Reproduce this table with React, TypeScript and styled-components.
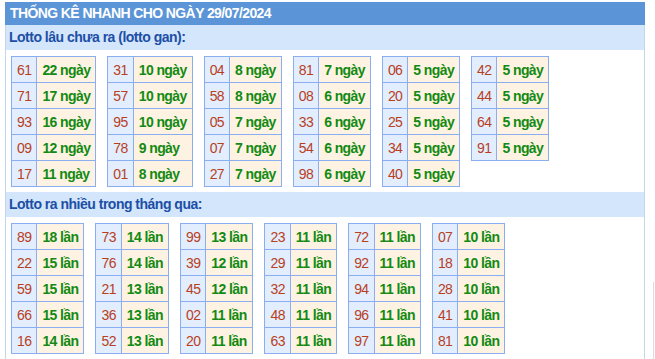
import React from 'react';
import styled, { createGlobalStyle } from 'styled-components';

const GlobalStyle = createGlobalStyle`
  body {
    margin: 0;
    background: #ffffff;
    overflow-x: hidden;
    font-family: 'Liberation Sans', Arial, sans-serif;
  }
`;

const Page = styled.div`
  display: flex;
  align-items: flex-start;
  gap: 8px;
  padding: 2px 0 0 5px;
`;

const Box = styled.div`
  flex-shrink: 0;
  width: 640px;
  box-sizing: border-box;
  border-left: 1px solid #c4d6ee;
  border-right: 1px solid #c4d6ee;
  min-height: 370px;
`;

const Title = styled.div`
  height: 23px;
  line-height: 23px;
  margin: 0 -1px;
  padding-left: 5px;
  background: #5b95d8;
  color: #ffffff;
  font-size: 14px;
  letter-spacing: -0.6px;
  font-weight: bold;
`;

const SectionTitle = styled.div<{ $gap?: number }>`
  height: 25px;
  line-height: 25px;
  margin-top: ${(p) => p.$gap || 0}px;
  padding-left: 3px;
  background: #d3e6fb;
  color: #1d4fa6;
  font-size: 14px;
  letter-spacing: -0.5px;
  font-weight: bold;
`;

const TableRow = styled.div`
  display: flex;
  flex-wrap: wrap;
  align-items: flex-start;
  gap: 11px;
  padding: 6px 0 0 5px;
`;

const StatTable = styled.table`
  border-collapse: collapse;
  font-size: 14px;
  letter-spacing: -0.6px;
`;

const NumCell = styled.td`
  height: 25px;
  padding: 0 5px;
  border: 1px solid #8aaef0;
  background: #e2eefd;
  color: #b8401e;
  text-align: center;
`;

const ValueCell = styled.td`
  height: 25px;
  padding: 0 5px;
  border: 1px solid #8aaef0;
  background: #fef3e2;
  color: #138a13;
  font-weight: bold;
  text-align: left;
  white-space: nowrap;
`;

const Side = styled.div`
  flex-shrink: 0;
  margin-top: 280px;
  width: 20px;
  height: 90px;
  border-left: 1px solid #dddddd;
`;

type Entry = [string, string];

const ganData: Entry[][] = [
  [['61', '22'], ['71', '17'], ['93', '16'], ['09', '12'], ['17', '11']],
  [['31', '10'], ['57', '10'], ['95', '10'], ['78', '9'], ['01', '8']],
  [['04', '8'], ['58', '8'], ['05', '7'], ['07', '7'], ['27', '7']],
  [['81', '7'], ['08', '6'], ['33', '6'], ['54', '6'], ['98', '6']],
  [['06', '5'], ['20', '5'], ['25', '5'], ['34', '5'], ['40', '5']],
  [['42', '5'], ['44', '5'], ['64', '5'], ['91', '5']],
];

const frequentData: Entry[][] = [
  [['89', '18'], ['22', '15'], ['59', '15'], ['66', '15'], ['16', '14']],
  [['73', '14'], ['76', '14'], ['21', '13'], ['36', '13'], ['52', '13']],
  [['99', '13'], ['39', '12'], ['45', '12'], ['02', '11'], ['20', '11']],
  [['23', '11'], ['29', '11'], ['32', '11'], ['48', '11'], ['63', '11']],
  [['72', '11'], ['92', '11'], ['94', '11'], ['96', '11'], ['97', '11']],
  [['07', '10'], ['18', '10'], ['28', '10'], ['41', '10'], ['81', '10']],
];

const Tables: React.FC<{ groups: Entry[][]; unit: string }> = ({ groups, unit }) => (
  <TableRow>
    {groups.map((group, gi) => (
      <StatTable key={gi}>
        <tbody>
          {group.map(([num, count]) => (
            <tr key={num}>
              <NumCell>{num}</NumCell>
              <ValueCell>
                {count} {unit}
              </ValueCell>
            </tr>
          ))}
        </tbody>
      </StatTable>
    ))}
  </TableRow>
);

const App: React.FC = () => (
  <>
    <GlobalStyle />
    <Page>
      <Box>
        <Title>THỐNG KÊ NHANH CHO NGÀY 29/07/2024</Title>
        <SectionTitle>Lotto lâu chưa ra (lotto gan):</SectionTitle>
        <Tables groups={ganData} unit="ngày" />
        <SectionTitle $gap={5}>Lotto ra nhiều trong tháng qua:</SectionTitle>
        <Tables groups={frequentData} unit="lần" />
      </Box>
      <Side />
    </Page>
  </>
);

export default App;
